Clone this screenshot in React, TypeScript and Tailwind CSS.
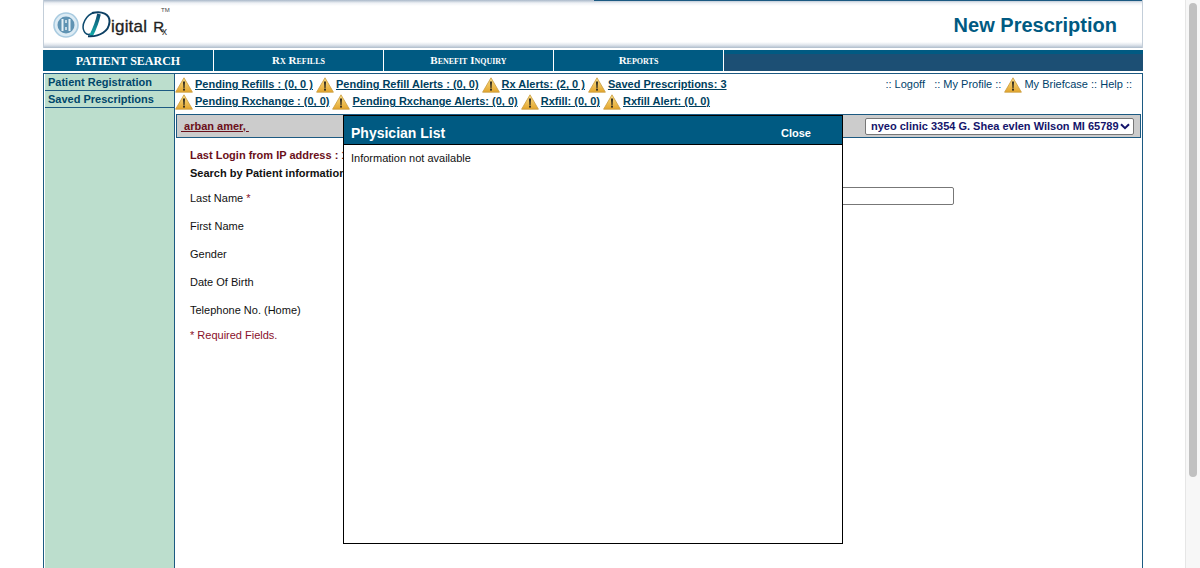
const sans = "font-['Liberation_Sans',Arial,sans-serif]";

function Warn({ className = "" }: { className?: string }) {
  return (
    <svg width="18" height="16" viewBox="0 0 18 16" className={`shrink-0 ${className}`}>
      <defs>
        <linearGradient id="warnFill" x1="0" y1="0" x2="0" y2="1">
          <stop offset="0" stopColor="#fbe08a" />
          <stop offset="1" stopColor="#e3a52c" />
        </linearGradient>
      </defs>
      <path d="M9 .8 L17.4 15.2 H.6 Z" fill="url(#warnFill)" stroke="#c99a3c" strokeWidth=".8" strokeLinejoin="round" />
      <path d="M7.9 4.4h2.2l-.5 6.6h-1.2z" fill="#3a3320" />
      <rect x="8" y="11.6" width="2" height="2" fill="#3a3320" />
    </svg>
  );
}

function Logo() {
  return (
    <div className="flex items-center pl-[9px] pt-[1px] h-full">
      <svg width="26" height="26" viewBox="0 0 26 26" className="shrink-0">
        <circle cx="13" cy="13" r="12" fill="#dcebf4" stroke="#a9cbe0" strokeWidth="1.6" />
        <circle cx="13" cy="13" r="8.5" fill="#5f93b3" />
        <path d="M9.5 7v12M16.5 7v12" stroke="#e6f1f7" strokeWidth="2" />
        <path d="M13 8v3M13 15v3" stroke="#e6f1f7" strokeWidth="1.5" />
      </svg>
      <svg width="29" height="27" viewBox="0 0 29 27" className="ml-[3px] shrink-0">
        <defs>
          <linearGradient id="dFill" x1="0" y1="0" x2="0" y2="1">
            <stop offset="0" stopColor="#0d4a6e" />
            <stop offset="1" stopColor="#14b0ad" />
          </linearGradient>
        </defs>
        <path d="M12 1.5C4 4 -1 14 2 20c1 3 4 4 6 3" fill="none" stroke="#0d4a6e" strokeWidth="1.5" />
        <path d="M17 3C15.5 10 12.5 18 9 25" fill="none" stroke="url(#dFill)" strokeWidth="3.6" />
        <path d="M10 2C20 -.5 28 3 27.5 11 27 20 18 26 6 25.2" fill="none" stroke="#0c3f63" strokeWidth="2" />
      </svg>
      <span className={`${sans} mt-[3px] text-[17px] leading-none tracking-[.2px] text-[#222] [-webkit-text-stroke:.3px_#222]`}>igital</span>
      <span className={`${sans} ml-[6px] mt-[3px] text-[15px] leading-none text-[#222] [-webkit-text-stroke:.3px_#222]`}>R</span>
      <div className="relative ml-[-2px]">
        <span className={`${sans} block mt-[15px] text-[10px] leading-none text-[#333]`}>x</span>
        <span className={`${sans} absolute left-[-1px] top-[-5px] text-[6px] leading-none text-[#444]`}>TM</span>
      </div>
    </div>
  );
}

function NavCell({ children, caps, width = "w-[170px]" }: { children: string; caps?: boolean; width?: string }) {
  return (
    <div
      className={`${width} flex items-center justify-center border-r border-white font-['Liberation_Serif',serif] font-bold text-white ${
        caps ? "text-[11px] [font-variant:small-caps]" : "text-[12px]"
      }`}
    >
      {children}
    </div>
  );
}

function Alert({ label, gap = true }: { label: string; gap?: boolean }) {
  return (
    <>
      <Warn className={gap ? "ml-[3px]" : ""} />
      <a className="ml-[2px] underline text-[#003f5e] font-bold text-[11px] whitespace-pre">{label}</a>
    </>
  );
}

const fields = ["First Name", "Gender", "Date Of Birth", "Telephone No. (Home)"];

export default function App() {
  return (
    <div className={`${sans} flex h-[568px] overflow-hidden bg-white`}>
      <div className="flex-1 min-w-0 pl-[43px]">
        <div className="w-[1100px]">
          {/* header */}
          <div className="relative h-[48px] flex justify-between bg-[linear-gradient(to_bottom,#a9b8c9_0,#eef1f5_3px,#ffffff_6px,#ffffff_42px,#dfe5ec_45px,#aebccb_48px)] border-l border-r border-[#c3ced9]">
            <div className="absolute left-[550px] right-0 top-0 h-[1px] bg-[#1c5a82]" />
            <Logo />
            <h1 className="pr-[25px] pt-[13px] text-[20px] leading-[24px] font-bold text-[#005a82]">New Prescription</h1>
          </div>

          {/* nav */}
          <div className="mt-[2px] h-[21px] flex bg-[#005a82]">
            <NavCell width="w-[171px]">PATIENT SEARCH</NavCell>
            <NavCell caps>Rx Refills</NavCell>
            <NavCell caps>Benefit Inquiry</NavCell>
            <NavCell caps>Reports</NavCell>
            <div className="flex-1 bg-[#1c4f74] mt-[4px]" />
          </div>

          {/* main */}
          <div className="relative mt-[2px] h-[495px] flex border-x border-t border-[#1c5a82]">
            <div className="w-[131px] border-r border-[#1c5a82] pl-[1px]">
              <div className="h-full bg-[#bcdecd]">
                <div className="h-[17px] border-b border-[#1c5a82] pl-[3px] text-[11px] leading-[16px] font-bold text-[#00476b]">Patient Registration</div>
                <div className="h-[17px] border-b border-[#1c5a82] pl-[3px] text-[11px] leading-[16px] font-bold text-[#00476b]">Saved Prescriptions</div>
              </div>
            </div>

            <div className="flex-1 min-w-0">
              {/* alerts */}
              <div className="flex justify-between h-[40px]">
                <div className="pt-[2px]">
                  <div className="flex items-center h-[17px]">
                    <Alert label="Pending Refills : (0, 0 )" gap={false} />
                    <Alert label="Pending Refill Alerts : (0, 0)" />
                    <Alert label="Rx Alerts: (2, 0 )" />
                    <Alert label="Saved Prescriptions: 3" />
                  </div>
                  <div className="flex items-center h-[17px]">
                    <Alert label="Pending Rxchange : (0, 0)" gap={false} />
                    <Alert label="Pending Rxchange Alerts: (0, 0)" />
                    <Alert label="Rxfill: (0, 0)" />
                    <Alert label="Rxfill Alert: (0, 0)" />
                  </div>
                </div>
                <div className="flex items-center h-[17px] mt-[2px] pr-[10px] text-[11px] text-[#003f6b] whitespace-pre">
                  <span>:: Logoff   :: My Profile ::</span>
                  <Warn className="ml-[3px]" />
                  <span className="ml-[2px]">My Briefcase :: Help ::</span>
                </div>
              </div>

              {/* patient bar */}
              <div className="mx-[1px] h-[24px] bg-[#cccccc] border border-[#1c5a82] flex items-center justify-between pl-[4px] pr-[6px]">
                <a className="underline text-[#6b0f1a] font-bold text-[11px]">&nbsp;arban amer,&nbsp;</a>
                <div className="w-[269px] h-[17px] bg-white border border-[#777] rounded-[2px] flex items-center justify-between pl-[5px] pr-[3px] text-[#14146b] font-bold text-[11px]">
                  <span className="whitespace-nowrap">nyeo clinic 3354 G. Shea evlen Wilson MI 65789</span>
                  <svg width="10" height="7" viewBox="0 0 10 7" className="shrink-0">
                    <path d="M1 1.2 5 5.2 9 1.2" fill="none" stroke="#14146b" strokeWidth="2" />
                  </svg>
                </div>
              </div>

              {/* search form */}
              <div className="pl-[15px] pt-[8px] w-[779px] text-[11px] text-[#111]">
                <div className="h-[18px] leading-[18px] font-bold text-[#6b0f1a] whitespace-nowrap">Last Login from IP address : 127.0.0.1</div>
                <div className="h-[18px] leading-[18px] font-bold whitespace-nowrap">Search by Patient information</div>
                <div className="mt-[2px] h-[28px] flex items-center justify-between">
                  <span>Last Name <span className="text-[#8a0f2a]">*</span></span>
                  <input className="w-[400px] h-[18px] mb-[4px] border border-[#777] rounded-[2px] bg-white" />
                </div>
                {fields.map((f) => (
                  <div key={f} className="h-[28px] flex items-center">{f}</div>
                ))}
                <div className="mt-[3px] h-[17px] leading-[17px] text-[#8a0f2a]">* Required Fields.</div>
              </div>
            </div>

            {/* physician list dialog */}
            <div className="absolute left-[299px] top-[41px] w-[500px] h-[429px] bg-white border border-black">
              <div className="h-[29px] bg-[#005a82] border-b border-black flex items-center justify-between pl-[7px] pr-[31px] pt-[6px] font-bold text-white">
                <span className="text-[14px]">Physician List</span>
                <a className="text-[11px] pt-[1px]">Close</a>
              </div>
              <p className="pl-[7px] pt-[7px] text-[11px] leading-[13px] text-[#111]">Information not available</p>
            </div>
          </div>
        </div>
      </div>

      {/* scrollbar */}
      <div className="w-[15px] shrink-0 bg-[#f7f7f7] border-l border-[#e6e6e6] pl-[3px] pt-[3px]">
        <div className="w-[8px] h-[474px] rounded-full bg-[#c1c1c1]" />
      </div>
    </div>
  );
}
